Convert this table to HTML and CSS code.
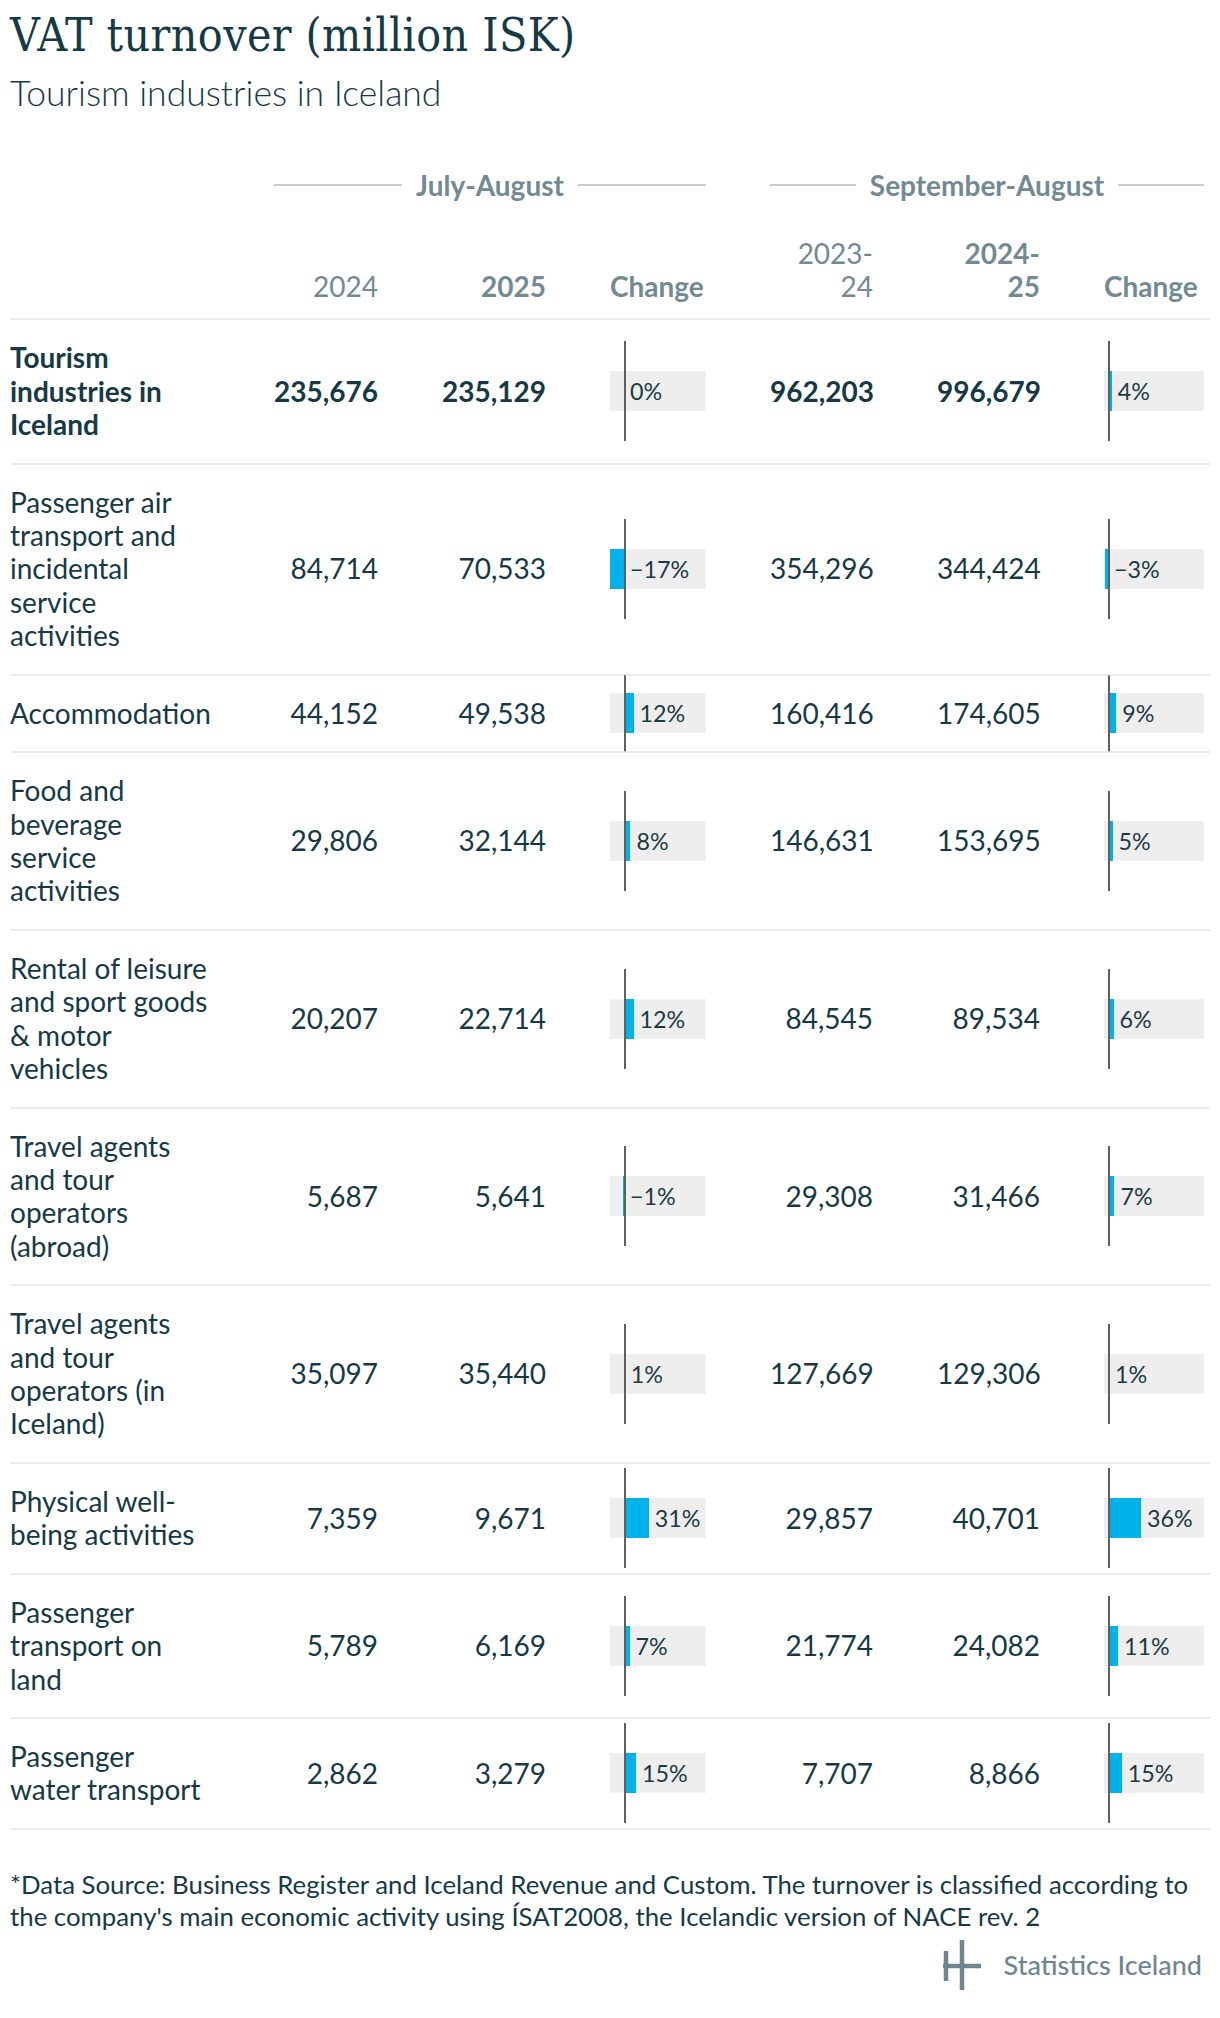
FILE: index.html
```html
<!DOCTYPE html>
<html lang="en">
<head>
<meta charset="utf-8">
<title>VAT turnover (million ISK)</title>
<link rel="stylesheet" href="styles.css">
</head>
<body>
<div class="page">
  <h1 class="title">VAT turnover (million ISK)</h1>
  <p class="subtitle">Tourism industries in Iceland</p>

  <div class="table">
    <div class="grp-row">
      <div class="grp g1"><span>July-August</span></div>
      <div class="grp g2"><span>September-August</span></div>
    </div>
    <div class="row head">
      <div class="name"></div>
      <div class="num">2024</div>
      <div class="num b">2025</div>
      <div class="chg-h b">Change</div>
      <div class="num">2023-24</div>
      <div class="num b">2024-25</div>
      <div class="chg-h b">Change</div>
    </div>

    <div class="row total">
      <div class="name">Tourism industries in Iceland</div>
      <div class="num">235,676</div>
      <div class="num">235,129</div>
      <div class="cell a"><div class="box"><div class="neg"></div><div class="bar" style="width:0px"></div><span class="lbl">0%</span></div><i class="axis"></i></div>
      <div class="num">962,203</div>
      <div class="num">996,679</div>
      <div class="cell c"><div class="box"><div class="neg"></div><div class="bar" style="width:3.7px"></div><span class="lbl">4%</span></div><i class="axis"></i></div>
    </div>

    <div class="row">
      <div class="name">Passenger air transport and incidental service activities</div>
      <div class="num">84,714</div>
      <div class="num">70,533</div>
      <div class="cell a"><div class="box"><div class="neg"><div class="bar" style="width:13.6px"></div></div><span class="lbl">−17%</span></div><i class="axis"></i></div>
      <div class="num">354,296</div>
      <div class="num">344,424</div>
      <div class="cell c"><div class="box"><div class="neg"><div class="bar" style="width:2.8px"></div></div><span class="lbl">−3%</span></div><i class="axis"></i></div>
    </div>

    <div class="row">
      <div class="name">Accommodation</div>
      <div class="num">44,152</div>
      <div class="num">49,538</div>
      <div class="cell a"><div class="box"><div class="neg"></div><div class="bar" style="width:9.6px"></div><span class="lbl">12%</span></div><i class="axis"></i></div>
      <div class="num">160,416</div>
      <div class="num">174,605</div>
      <div class="cell c"><div class="box"><div class="neg"></div><div class="bar" style="width:8.3px"></div><span class="lbl">9%</span></div><i class="axis"></i></div>
    </div>

    <div class="row">
      <div class="name">Food and beverage service activities</div>
      <div class="num">29,806</div>
      <div class="num">32,144</div>
      <div class="cell a"><div class="box"><div class="neg"></div><div class="bar" style="width:6.4px"></div><span class="lbl">8%</span></div><i class="axis"></i></div>
      <div class="num">146,631</div>
      <div class="num">153,695</div>
      <div class="cell c"><div class="box"><div class="neg"></div><div class="bar" style="width:4.6px"></div><span class="lbl">5%</span></div><i class="axis"></i></div>
    </div>

    <div class="row">
      <div class="name">Rental of leisure and sport goods &amp; motor vehicles</div>
      <div class="num">20,207</div>
      <div class="num">22,714</div>
      <div class="cell a"><div class="box"><div class="neg"></div><div class="bar" style="width:9.6px"></div><span class="lbl">12%</span></div><i class="axis"></i></div>
      <div class="num">84,545</div>
      <div class="num">89,534</div>
      <div class="cell c"><div class="box"><div class="neg"></div><div class="bar" style="width:5.5px"></div><span class="lbl">6%</span></div><i class="axis"></i></div>
    </div>

    <div class="row">
      <div class="name">Travel agents and tour operators (abroad)</div>
      <div class="num">5,687</div>
      <div class="num">5,641</div>
      <div class="cell a"><div class="box"><div class="neg"><div class="bar" style="width:0.8px"></div></div><span class="lbl">−1%</span></div><i class="axis"></i></div>
      <div class="num">29,308</div>
      <div class="num">31,466</div>
      <div class="cell c"><div class="box"><div class="neg"></div><div class="bar" style="width:6.4px"></div><span class="lbl">7%</span></div><i class="axis"></i></div>
    </div>

    <div class="row">
      <div class="name">Travel agents and tour operators (in Iceland)</div>
      <div class="num">35,097</div>
      <div class="num">35,440</div>
      <div class="cell a"><div class="box"><div class="neg"></div><div class="bar" style="width:0.8px"></div><span class="lbl">1%</span></div><i class="axis"></i></div>
      <div class="num">127,669</div>
      <div class="num">129,306</div>
      <div class="cell c"><div class="box"><div class="neg"></div><div class="bar" style="width:0.9px"></div><span class="lbl">1%</span></div><i class="axis"></i></div>
    </div>

    <div class="row">
      <div class="name">Physical well-being activities</div>
      <div class="num">7,359</div>
      <div class="num">9,671</div>
      <div class="cell a"><div class="box"><div class="neg"></div><div class="bar" style="width:24.8px"></div><span class="lbl">31%</span></div><i class="axis"></i></div>
      <div class="num">29,857</div>
      <div class="num">40,701</div>
      <div class="cell c"><div class="box"><div class="neg"></div><div class="bar" style="width:33.1px"></div><span class="lbl">36%</span></div><i class="axis"></i></div>
    </div>

    <div class="row">
      <div class="name">Passenger transport on land</div>
      <div class="num">5,789</div>
      <div class="num">6,169</div>
      <div class="cell a"><div class="box"><div class="neg"></div><div class="bar" style="width:5.6px"></div><span class="lbl">7%</span></div><i class="axis"></i></div>
      <div class="num">21,774</div>
      <div class="num">24,082</div>
      <div class="cell c"><div class="box"><div class="neg"></div><div class="bar" style="width:10.1px"></div><span class="lbl">11%</span></div><i class="axis"></i></div>
    </div>

    <div class="row">
      <div class="name">Passenger water transport</div>
      <div class="num">2,862</div>
      <div class="num">3,279</div>
      <div class="cell a"><div class="box"><div class="neg"></div><div class="bar" style="width:12px"></div><span class="lbl">15%</span></div><i class="axis"></i></div>
      <div class="num">7,707</div>
      <div class="num">8,866</div>
      <div class="cell c"><div class="box"><div class="neg"></div><div class="bar" style="width:13.8px"></div><span class="lbl">15%</span></div><i class="axis"></i></div>
    </div>
  </div>

  <p class="note">*Data Source: Business Register and Iceland Revenue and Custom. The turnover is classified according to the company's main economic activity using ÍSAT2008, the Icelandic version of NACE rev. 2</p>

  <div class="logo">
    <svg class="mark" width="40" height="50" viewBox="0 0 40 50" aria-hidden="true">
      <g stroke="#6f868e" stroke-width="4.5" fill="none">
        <line x1="3" y1="11" x2="3" y2="24"/>
        <line x1="19" y1="0" x2="19" y2="24"/>
        <line x1="0" y1="26" x2="38" y2="26"/>
        <line x1="3" y1="28" x2="3" y2="41"/>
        <line x1="19" y1="28" x2="19" y2="50"/>
      </g>
    </svg>
    <span class="logo-text">Statistics Iceland</span>
  </div>
</div>
</body>
</html>
```

FILE: styles.css
```css
html, body {
  margin: 0;
  padding: 0;
  background: #ffffff;
}

.page {
  padding: 0 10px;
  font-family: Lato, "Noto Sans", sans-serif;
  color: #163a45;
}

.title {
  margin: 0;
  padding-top: 8px;
  font-family: "DejaVu Serif Condensed", "DejaVu Serif", serif;
  font-weight: normal;
  font-size: 46px;
  line-height: 54px;
  letter-spacing: 0.4px;
  color: #163a45;
}

.subtitle {
  margin: 11px 0 0;
  font-weight: 300;
  font-size: 35.5px;
  line-height: 40px;
  color: #163a45;
}

.table {
  margin-top: 55px;
  width: 1200px;
}

.grp-row,
.row {
  display: grid;
  grid-template-columns: 200px 104px 104px 96px 103px 103px 100px;
  column-gap: 64px;
  padding-right: 6px;
}

.grp {
  display: flex;
  align-items: center;
  gap: 14px;
  font-weight: 700;
  font-size: 28px;
  line-height: 34px;
  color: #728a92;
}

.grp::before,
.grp::after {
  content: "";
  flex: 1;
  height: 2px;
  background: #cccccc;
}

.g1 { grid-column: 2 / 5; }
.g2 { grid-column: 5 / 8; }

.row {
  border-bottom: 2px solid #ececec;
  font-size: 28px;
  line-height: 33.42px;
}

.row.head {
  margin-top: 34.5px;
  align-items: end;
  color: #728a92;
  padding-bottom: 15px;
  border-bottom-width: 2px;
}

.row.head .num { text-align: right; }
.b { font-weight: 700; }
.chg-h { text-align: left; }

.row:not(.head) {
  align-items: center;
}

.name {
  padding: 21px 0;
}

.num {
  text-align: right;
}

.total .name,
.total .num {
  font-weight: 700;
}

.cell {
  align-self: stretch;
  position: relative;
  display: flex;
  align-items: center;
}

.box {
  display: flex;
  align-items: center;
  height: 40px;
  background: #eeeeee;
}

.cell.a .box { width: 96px; }
.cell.c .box { width: 100px; }

.neg {
  display: flex;
  justify-content: flex-end;
  height: 40px;
  flex: none;
}

.cell.a .neg { width: 14px; }
.cell.c .neg { width: 4px; }

.bar {
  height: 40px;
  background: #00b2ea;
  flex: none;
}

.lbl {
  margin-left: 6px;
  font-size: 23.3px;
  line-height: 28px;
  color: #1d3a44;
}

.axis {
  position: absolute;
  top: 50%;
  width: 2px;
  height: 100px;
  max-height: 100%;
  transform: translateY(-50%);
  background: #606060;
}

.cell.a .axis { left: 14px; }
.cell.c .axis { left: 4px; }

.note {
  margin: 38px 0 0;
  width: 1200px;
  font-size: 25.8px;
  line-height: 32.5px;
  color: #163a45;
}

.logo {
  margin-top: 7px;
  width: 1192px;
  display: flex;
  justify-content: flex-end;
  align-items: center;
  gap: 21px;
}

.mark {
  display: block;
}

.logo-text {
  font-size: 27px;
  font-weight: 500;
  color: #6f868e;
  line-height: 30px;
}
```
